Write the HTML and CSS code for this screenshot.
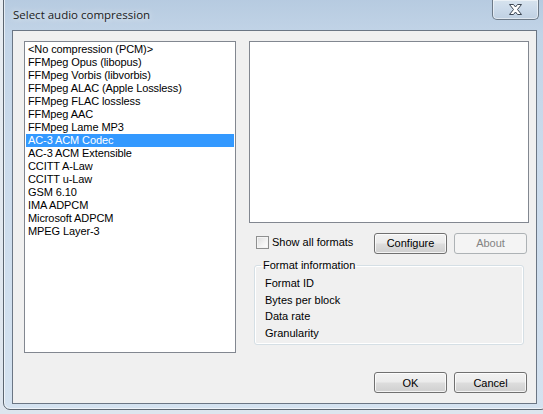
FILE: index.html
```html
<!DOCTYPE html>
<html>
<head>
<meta charset="utf-8">
<link rel="stylesheet" href="styles.css">
</head>
<body>
<div class="screen">
  <div class="window">
    <div class="titlebar">
      <span class="title">Select audio compression</span>
      <button class="close" aria-label="Close">
        <svg width="17" height="11" viewBox="0 0 17 11">
          <path d="M2.5 0.5h4l2 2.5 2-2.5h4l-4 5 4 5h-4l-2-2.5-2 2.5h-4l4-5z" fill="#fff" stroke="#3b4552" stroke-width="1" stroke-linejoin="round"/>
        </svg>
      </button>
    </div>
    <div class="client">
      <div class="main">
        <ul class="listbox">
          <li>&lt;No compression (PCM)&gt;</li>
          <li>FFMpeg Opus (libopus)</li>
          <li>FFMpeg Vorbis (libvorbis)</li>
          <li>FFMpeg ALAC (Apple Lossless)</li>
          <li>FFMpeg FLAC lossless</li>
          <li>FFMpeg AAC</li>
          <li>FFMpeg Lame MP3</li>
          <li class="selected">AC-3 ACM Codec</li>
          <li>AC-3 ACM Extensible</li>
          <li>CCITT A-Law</li>
          <li>CCITT u-Law</li>
          <li>GSM 6.10</li>
          <li>IMA ADPCM</li>
          <li>Microsoft ADPCM</li>
          <li>MPEG Layer-3</li>
        </ul>
        <div class="side">
          <div class="formats"></div>
          <div class="controls">
            <label class="check"><span class="box"></span>Show all formats</label>
            <div class="btns">
              <button class="btn">Configure</button>
              <button class="btn disabled">About</button>
            </div>
          </div>
          <fieldset class="group">
            <legend>Format information</legend>
            <div class="info">Format ID</div>
            <div class="info">Bytes per block</div>
            <div class="info">Data rate</div>
            <div class="info">Granularity</div>
          </fieldset>
        </div>
      </div>
      <div class="footer">
        <button class="btn">OK</button>
        <button class="btn">Cancel</button>
      </div>
    </div>
  </div>
</div>
</body>
</html>
```
FILE: styles.css
```css
* { box-sizing: border-box; }
html, body { margin: 0; padding: 0; }
body { background: #dfe6ee; }

.screen {
  width: 543px;
  height: 414px;
  overflow: hidden;
  background: linear-gradient(180deg, #e8edf2 0%, #dde5ee 100%);
  padding-left: 3px;
}

.window {
  width: 545px;
  height: 418px;
  margin-top: -8px;
  border: 1px solid #5b6570;
  border-radius: 7px;
  background: linear-gradient(180deg, #b4c9df 0%, #c2d4e7 10%, #cbdbec 40%, #d4e2f0 100%);
  box-shadow: inset 0 0 0 1px rgba(255,255,255,0.6);
  padding: 0 10px 0 8px;
  display: flex;
  flex-direction: column;
}

.titlebar {
  height: 30px;
  margin-top: 7px;
  display: flex;
  justify-content: space-between;
  align-items: flex-start;
  font-family: "Open Sans", "Noto Sans", sans-serif;
}

.title {
  margin-top: 7px;
  padding-left: 1px;
  font-size: 11.5px;
  line-height: 16px;
  color: #1b1b1b;
  text-shadow: 0 0 6px rgba(255,255,255,0.9);
}

.close {
  width: 47px;
  height: 20px;
  margin-right: -2px;
  padding: 0;
  border: 1px solid #6d7a88;
  border-top: none;
  border-radius: 0 0 5px 5px;
  background: linear-gradient(180deg, #d7e3ee 0%, #cbdaea 50%, #bfd0e2 100%);
  box-shadow: inset 0 0 0 1px rgba(255,255,255,0.5);
  display: flex;
  align-items: center;
  justify-content: center;
}

.client {
  width: 525px;
  height: 374px;
  background: #f0f0f0;
  border: 1px solid #6b7684;
  padding: 10px 7px 0 11px;
  font-family: "Liberation Sans", Arial, sans-serif;
  font-size: 11px;
  color: #000;
  display: flex;
  flex-direction: column;
}

.main {
  display: grid;
  grid-template-columns: 212px 280px;
  column-gap: 13px;
}

.listbox {
  list-style: none;
  margin: 0;
  padding: 1px;
  height: 312px;
  background: #fff;
  border: 1px solid #828790;
}

.listbox li {
  height: 13px;
  line-height: 13px;
  padding-left: 2px;
  white-space: nowrap;
  letter-spacing: -0.1px;
}

.listbox li.selected {
  background: #3399ff;
  color: #fff;
}

.side {
  display: flex;
  flex-direction: column;
}

.formats {
  height: 182px;
  background: #fff;
  border: 1px solid #828790;
}

.controls {
  margin-top: 10px;
  height: 20px;
  display: flex;
  justify-content: space-between;
  align-items: center;
  padding-left: 7px;
}

.check {
  display: flex;
  align-items: center;
  gap: 3px;
  margin-top: -2px;
}

.box {
  width: 13px;
  height: 13px;
  border: 1px solid #8e8f8f;
  background: linear-gradient(135deg, #dcdcdc 0%, #f4f4f4 60%, #ffffff 100%);
  box-shadow: inset 0 0 0 1px #f4f4f4;
}

.btns {
  display: flex;
  gap: 7px;
  margin-right: 2px;
}

.btn {
  width: 73px;
  height: 21px;
  padding: 0;
  border: 1px solid #707070;
  border-radius: 3px;
  background: linear-gradient(180deg, #f2f2f2 0%, #ebebeb 48%, #dddddd 52%, #cfcfcf 100%);
  box-shadow: inset 0 0 0 1px rgba(255,255,255,0.75);
  font-family: "Liberation Sans", Arial, sans-serif;
  font-size: 11px;
  color: #000;
}

.btn.disabled {
  border-color: #adb2b5;
  background: #f4f4f4;
  box-shadow: none;
  color: #838383;
}

.group {
  margin: 6px 5px 0 5px;
  padding: 5px 0 0 10px;
  height: 86px;
  border: 1px solid #d5dfe5;
  border-radius: 3px;
  box-shadow: inset 0 0 0 1px #ffffff;
}

.group legend {
  padding: 0 2px;
  margin-left: -4px;
  line-height: 13px;
}

.info {
  height: 16.5px;
  line-height: 13px;
}

.footer {
  margin-top: 19px;
  display: flex;
  justify-content: flex-end;
  gap: 7px;
  padding-right: 2px;
}
```
